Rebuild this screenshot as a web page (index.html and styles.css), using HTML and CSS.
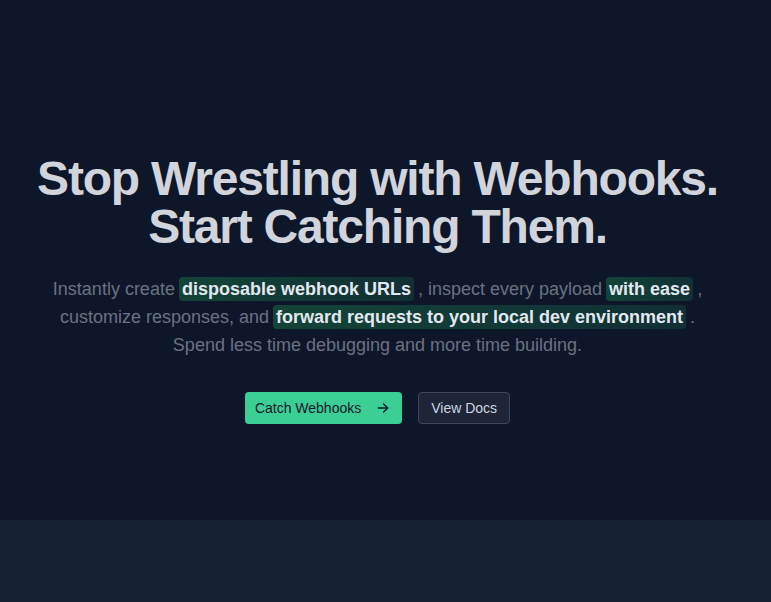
FILE: index.html
```html
<!DOCTYPE html>
<html lang="en">
<head>
<meta charset="utf-8">
<title>Catch Webhooks</title>
<link rel="stylesheet" href="styles.css">
</head>
<body>
<main class="page">
  <section class="hero">
    <h1 class="hero-title">Stop Wrestling with Webhooks.<br>Start Catching Them.</h1>
    <p class="hero-text">Instantly create <span class="hl">disposable webhook URLs</span> , inspect every payload <span class="hl">with ease</span> , customize responses, and <span class="hl">forward requests to your local dev environment</span> . Spend less time debugging and more time building.</p>
    <div class="actions">
      <a class="btn btn-primary" href="#">Catch Webhooks
        <svg class="btn-icon" viewBox="0 0 24 24" width="14" height="14" fill="none" stroke="currentColor" stroke-width="2.4" stroke-linecap="round" stroke-linejoin="round"><path d="M4 12h16"/><path d="M13 5l7 7-7 7"/></svg>
      </a>
      <a class="btn btn-secondary" href="#">View Docs</a>
    </div>
  </section>
  <section class="below"></section>
</main>
</body>
</html>
```

FILE: styles.css
```css
* { box-sizing: border-box; }
html, body { margin: 0; padding: 0; }
body {
  background: #0e172a;
  font-family: "Liberation Sans", Arial, sans-serif;
  color: #d1d5db;
}
.page { display: flex; flex-direction: column; min-height: 602px; }
.hero {
  height: 520px;
  background: #0e172a;
  display: flex;
  flex-direction: column;
  align-items: center;
  padding: 155px 16px 0 0;
}
.hero-title {
  margin: 0;
  font-size: 48px;
  line-height: 48px;
  font-weight: 700;
  text-align: center;
  color: #d1d5db;
  letter-spacing: -1.2px;
}
.hero-text {
  margin: 24px 0 0;
  max-width: 672px;
  font-size: 18px;
  line-height: 28px;
  text-align: center;
  color: #6b7280;
}
.hl {
  font-weight: 700;
  color: #e2e8f0;
  background: linear-gradient(to right, #134437, #112f35);
  padding: 2px 3px;
  margin: 0 -1px;
  border-radius: 4px;
}
.actions {
  margin-top: 33px;
  display: flex;
  gap: 16px;
}
.btn {
  display: flex;
  align-items: center;
  height: 32px;
  font-size: 14px;
  text-decoration: none;
  border-radius: 4px;
}
.btn-primary {
  background: #3bcf96;
  color: #111827;
  padding: 0 12px 0 10px;
  gap: 15px;
}
.btn-icon { display: block; }
.btn-secondary {
  background: #1e2536;
  color: #cbd5e1;
  border: 1px solid #3f4757;
  padding: 0 12px;
}
.below {
  flex: 1;
  background: #162033;
}
```
